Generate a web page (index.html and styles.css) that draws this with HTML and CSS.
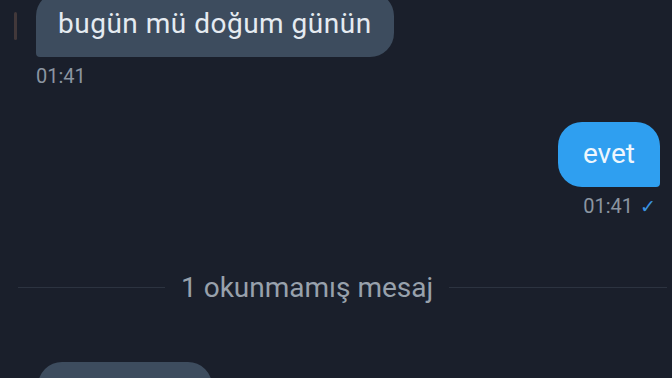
FILE: index.html
```html
<!DOCTYPE html>
<html lang="tr">
<head>
  <meta charset="UTF-8" />
  <title>Sohbet</title>
  <link rel="stylesheet" href="styles.css">
</head>
<body>
  <div class="chat">
    <div class="msg in first">
      <div class="avatar-edge"></div>
      <div class="bubble">bugün mü doğum günün</div>
      <div class="time">01:41</div>
    </div>

    <div class="msg out">
      <div class="bubble">evet</div>
      <div class="time">01:41 <span class="check">&#10003;</span></div>
    </div>

    <div class="divider">
      <span class="line left"></span>
      <span class="label">1 okunmamış mesaj</span>
      <span class="line"></span>
    </div>

    <div class="msg in">
      <div class="bubble peek"></div>
    </div>
  </div>
</body>
</html>
```

FILE: styles.css
```css
:root {
  --bg: #1a1f2b;
  --bubble-in: #3d4c5e;
  --bubble-out: #2f9ff0;
  --text: #e6edf3;
  --muted: #8b95a1;
  --line: #2c3340;
}

html, body {
  margin: 0;
  height: 100%;
  overflow: hidden;
}

body {
  background-color: var(--bg);
  color: var(--text);
  font-family: Roboto, "Noto Sans", sans-serif;
}

.chat {
  display: flex;
  flex-direction: column;
  padding: 0 12px 0 36px;
}

.msg {
  display: flex;
  flex-direction: column;
  position: relative;
}

.msg.in {
  align-items: flex-start;
}

.msg.out {
  align-items: flex-end;
  margin-top: 34px;
}

.msg.first {
  margin-top: -8px;
}

.bubble {
  height: 65px;
  display: flex;
  align-items: center;
  font-size: 28px;
  box-sizing: border-box;
}

.msg.in .bubble {
  background-color: var(--bubble-in);
  padding: 0 22px 2px;
  border-radius: 24px 24px 24px 4px;
  color: #e5ebf1;
  letter-spacing: 0.5px;
}

.msg.out .bubble {
  background-color: var(--bubble-out);
  padding: 0 25px 2px;
  border-radius: 24px 24px 4px 24px;
  color: #eef6fd;
}

.time {
  font-size: 20px;
  line-height: 23px;
  color: var(--muted);
  margin-top: 8px;
}

.msg.out .time {
  margin-right: 4px;
}

.check {
  color: #3b94e3;
  font-size: 19px;
  margin-left: 2px;
}

.avatar-edge {
  position: absolute;
  left: -22px;
  top: 20px;
  width: 3px;
  height: 28px;
  border-radius: 2px;
  background: #5e4a45;
  opacity: 0.6;
}

.divider {
  display: flex;
  align-items: center;
  gap: 16px;
  margin: 53px -7px 0 -18px;
}

.divider .line {
  flex: 1;
  height: 1px;
  background-color: var(--line);
}

.divider .line.left {
  flex: 0 0 147px;
}

.divider .label {
  font-size: 28px;
  line-height: 33px;
  color: #98a1ac;
}

.msg .bubble.peek {
  width: 174px;
  margin-top: 58px;
  margin-left: 2px;
  border-radius: 24px;
}
```
